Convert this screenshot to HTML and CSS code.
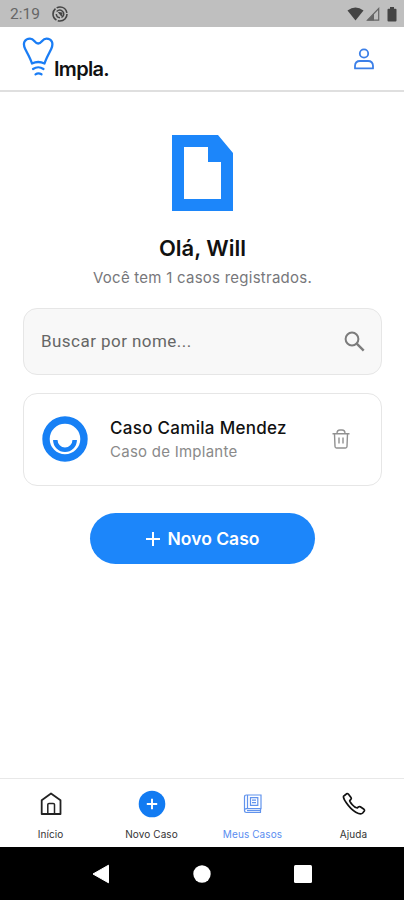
FILE: index.html
```html
<!DOCTYPE html>
<html lang="pt-BR">

<head>
    <meta charset="UTF-8">
    <meta name="viewport" content="width=device-width, initial-scale=1.0">
    <title>Impla - Meus Casos</title>
    <link rel="stylesheet" href="styles.css">
</head>
<body>

    <!-- Status bar -->
    <div class="status-bar">
        <span class="clock">2:19</span>
        <svg width="16" height="16" viewBox="0 0 16 16" fill="none" stroke="#444">
            <circle cx="8" cy="8" r="7" stroke-width="1.6" stroke-dasharray="13.2 1.460"/>
            <path d="M4.600 5.500Q8 2.500 10.700 5.500T9.500 11.500M4.300 8Q4.500 11.500 8 11.800" stroke-width="1.500"/>
            <path d="M6.500 6.500L10 7L9.500 10z" fill="#444"/>
        </svg>
        <div class="status-icons">
            <svg width="17" height="14" viewBox="0 0 17 14"><path d="M.5 3.500Q8.500-2.500 16.500 3.500L8.500 13.500z" fill="#444"/></svg>
            <svg width="14" height="14" viewBox="0 0 14 14"><path d="M1.500 13.200H12.700V1.500z" fill="none" stroke="#666" stroke-width="1.200"/><path d="M1 13.500H8V6.500z" fill="#666"/></svg>
            <svg class="battery" width="10" height="15" viewBox="0 0 10 15"><path d="M3 0h4v1.700h1.500q1 0 1 1V13.500q0 1-1 1h-7q-1 0-1-1V2.700q0-1 1-1H3z" fill="#444"/></svg>
        </div>
    </div>

    <!-- Header -->
    <header class="header">
        <div class="logo">
            <svg width="32" height="40" viewBox="0 0 32 40" fill="none" stroke="#1a7df5" stroke-width="2.300" stroke-linecap="round" stroke-linejoin="round">
                <path d="M10 26.500C8.300 21 5.500 16.500 3.200 12C.2 6 3 1.600 8 1.600C12.500 1.600 12.500 6.500 16.200 6.500S20 1.600 24.500 1.600C29.500 1.600 32 6 29.200 12C27 16.500 24.200 21 22.500 26.500Q16.200 23.500 10 26.500z"/>
                <path d="M11 32Q16.300 28.500 21.500 32M13.500 37.300Q16.300 35.300 19.500 37.300" stroke-width="2.200"/>
            </svg>
            <span class="logo-text">Impla.</span>
        </div>
        <svg class="user-icon" width="20" height="22" viewBox="0 0 20 22" fill="none" stroke="#3b7fe8" stroke-width="1.800">
            <circle cx="10" cy="5.500" r="4.200"/>
            <path d="M1 20.400V17.800Q1.200 13 6 13H14Q18.800 13 19 17.800V20.400z" stroke-linejoin="round"/>
        </svg>
    </header>

    <!-- Cases -->
    <main class="content">
        <svg width="61" height="76" viewBox="0 0 61 76">
            <path d="M0 0H46L61 18V76H0zM12 12V64H49V27H36V12z" fill="#1c86fa" fill-rule="evenodd"/>
        </svg>
        <h1 class="title">Olá, Will</h1>
        <p class="subtitle">Você tem 1 casos registrados.</p>

        <div class="search">
            <span class="search-text">Buscar por nome...</span>
            <svg width="21" height="21" viewBox="0 0 21 21" fill="none" stroke="#7c7c7c" stroke-width="2">
                <circle cx="8" cy="8" r="6.400"/>
                <path d="M12.700 12.700L19.700 19.700" stroke-width="2.400"/>
            </svg>
        </div>

        <div class="case">
            <svg width="46" height="46" viewBox="0 0 46 46" fill="none" stroke="#1780f5">
                <circle cx="23" cy="23" r="19" stroke-width="7.400"/>
                <path d="M13.300 24A9.600 9.600 0 0 0 32.700 24" stroke-width="4.500"/>
            </svg>
            <div class="case-info">
                <h2 class="case-name">Caso Camila Mendez</h2>
                <p class="case-type">Caso de Implante</p>
            </div>
            <svg class="trash" width="18" height="20" viewBox="0 0 18 20" fill="none" stroke="#919191" stroke-width="1.400">
                <path d="M.5 4.700H17.500M5 4.500Q5 1 8 1H10Q13 1 13 4.500M2.500 5L3 17.500Q3.100 19 4.500 19H13.500Q14.900 19 15 17.500L15.500 5M7 8.500V14.500M11 8.500V14.500"/>
            </svg>
        </div>

        <button class="new-case">
            <svg width="14" height="14" viewBox="0 0 14 14" stroke="#fff" stroke-width="2"><path d="M0 7H14M7 0V14"/></svg>
            <span>Novo Caso</span>
        </button>
    </main>

    <!-- Tabs -->
    <nav class="tabs">
        <a class="tab">
            <svg width="28" height="28" viewBox="0 0 28 28" fill="none" stroke="#222" stroke-width="1.800" stroke-linejoin="round">
                <path d="M4.700 24V10.200L14 3.500L23.500 10.200V24z"/>
                <path d="M10.800 24V14.500Q10.800 13.500 12 13.500H16.200Q17.500 13.500 17.500 14.500V24" stroke-width="1.500"/>
            </svg>
            <span>Início</span>
        </a>
        <a class="tab">
            <svg width="28" height="28" viewBox="0 0 28 28">
                <circle cx="14" cy="14" r="13.300" fill="#127bf2"/>
                <path d="M8.800 14H19.200M14 8.800V19.200" stroke="#fff" stroke-width="1.900"/>
            </svg>
            <span>Novo Caso</span>
        </a>
        <a class="tab tab-active">
            <svg width="28" height="28" viewBox="0 0 28 28" fill="none" stroke="#6193ed" stroke-width="1.200">
                <path d="M5.500 20.500V7Q5.500 5 7.500 5H22V18.700H7.500Q5.500 18.700 5.500 20.600T7.500 22.500H22M8.500 5V18.500M21.500 18.700V22.500M8 20.600H21"/>
                <path d="M11.500 7.700H18.800V15.300H11.500zM13 10.200H17M13 12.700H17"/>
            </svg>
            <span>Meus Casos</span>
        </a>
        <a class="tab">
            <svg width="28" height="28" viewBox="0 0 28 28" fill="none" stroke="#111" stroke-width="1.700" stroke-linejoin="round">
                <path d="M4.500 5.500L6.500 3.800Q7.500 3.200 8.300 4L11 7.500Q11.700 8.500 10.900 9.300L9.700 10.600Q9.500 11.500 12.300 14.700T17.200 18L18.500 16.900Q19.400 16.200 20.300 16.800L24 19.300Q24.900 20 24.300 21L22.700 23Q20.800 25 15.800 22.200T6.300 12.800T4.500 5.500z"/>
            </svg>
            <span>Ajuda</span>
        </a>
    </nav>

    <!-- Android navigation -->
    <div class="android-nav">
        <svg width="18" height="20" viewBox="0 0 18 20"><path d="M1 10L16.500 1.200V18.800z" fill="#fff" stroke="#fff" stroke-linejoin="round"/></svg>
        <svg width="18" height="18" viewBox="0 0 18 18"><circle cx="9" cy="9" r="8.700" fill="#fff"/></svg>
        <svg width="18" height="18" viewBox="0 0 18 18"><rect width="18" height="18" rx="1.500" fill="#fff"/></svg>
    </div>

</body>

</html>
```
FILE: styles.css
```css
/* General */
* {
    box-sizing: border-box;
}

body {
    margin: 0;
    height: 900px;
    display: flex;
    flex-direction: column;
    overflow: hidden;
    background-color: white;
    color: #111;
    font-family: Inter, sans-serif;
}

h1, h2, p {
    margin: 0;
    white-space: nowrap;
}

svg {
    display: block;
    flex-shrink: 0;
}

/* Status bar */
.status-bar {
    height: 27px;
    display: flex;
    align-items: center;
    padding: 1px 7px 0 10px;
    background-color: #bfbfbf;
}

.clock {
    width: 42px;
    font-family: Roboto, sans-serif;
    font-size: 15.5px;
    color: #666;
}

.status-icons {
    display: flex;
    align-items: center;
    gap: 2px;
    margin-left: auto;
}

.battery {
    margin-left: 5px;
}

/* Header */
.header {
    height: 65px;
    display: flex;
    justify-content: space-between;
    padding: 10px 30px 0 22px;
    border-bottom: 2px solid #dfdfdf;
}

.logo {
    display: flex;
}

.logo-text {
    margin-top: 19px;
    font-size: 20px;
    font-weight: 600;
    line-height: 26px;
    letter-spacing: -0.7px;
}

.user-icon {
    margin-top: 11px;
}

/* Content */
.content {
    flex: 1;
    display: flex;
    flex-direction: column;
    align-items: center;
    padding: 43px 22px 0 23px;
}

.title {
    margin-top: 22px;
    font-size: 22px;
    font-weight: 600;
    line-height: 30px;
}

.subtitle {
    margin-top: 5px;
    font-size: 15px;
    line-height: 20px;
    letter-spacing: 0.25px;
    color: #77777b;
}

/* Search */
.search {
    width: 100%;
    height: 67px;
    display: flex;
    align-items: center;
    justify-content: space-between;
    margin-top: 20px;
    padding: 0 16px 0 17px;
    background-color: #f8f8f8;
    border: 1px solid #e6e6e6;
    border-radius: 14px;
}

.search-text {
    padding-bottom: 2px;
    font-family: Roboto, sans-serif;
    font-size: 17px;
    letter-spacing: 0.45px;
    color: #666;
}

/* Case card */
.case {
    width: 100%;
    height: 93px;
    display: flex;
    align-items: center;
    margin-top: 18px;
    padding: 0 31px 1px 18px;
    border: 1px solid #e6e6e6;
    border-radius: 14px;
}

.case-info {
    margin-left: 22px;
    padding-top: 1px;
}

.case-name {
    font-size: 17px;
    font-weight: 500;
    line-height: 23px;
    letter-spacing: 0.3px;
}

.case-type {
    font-size: 15px;
    line-height: 23px;
    letter-spacing: 0.25px;
    color: #8a8a8a;
}

.trash {
    margin-left: auto;
}

/* Button */
.new-case {
    width: 225px;
    height: 51px;
    display: flex;
    align-items: center;
    justify-content: center;
    gap: 8px;
    margin-top: 27px;
    padding: 0;
    border: none;
    border-radius: 26px;
    background-color: #1c86fa;
    color: white;
    font-family: inherit;
    font-size: 17.5px;
    font-weight: 600;
}

/* Tabs */
.tabs {
    height: 69px;
    display: grid;
    grid-template-columns: repeat(4, 1fr);
    border-top: 1px solid #e8e8e8;
}

.tab {
    display: flex;
    flex-direction: column;
    align-items: center;
    gap: 9px;
    padding-top: 11px;
    font-size: 10px;
    line-height: 14px;
    letter-spacing: 0.1px;
    white-space: nowrap;
    color: #333;
}

.tab-active {
    color: #5a8df0;
}

/* Android navigation */
.android-nav {
    height: 53px;
    display: flex;
    align-items: center;
    justify-content: center;
    gap: 83px;
    background-color: black;
}
```
